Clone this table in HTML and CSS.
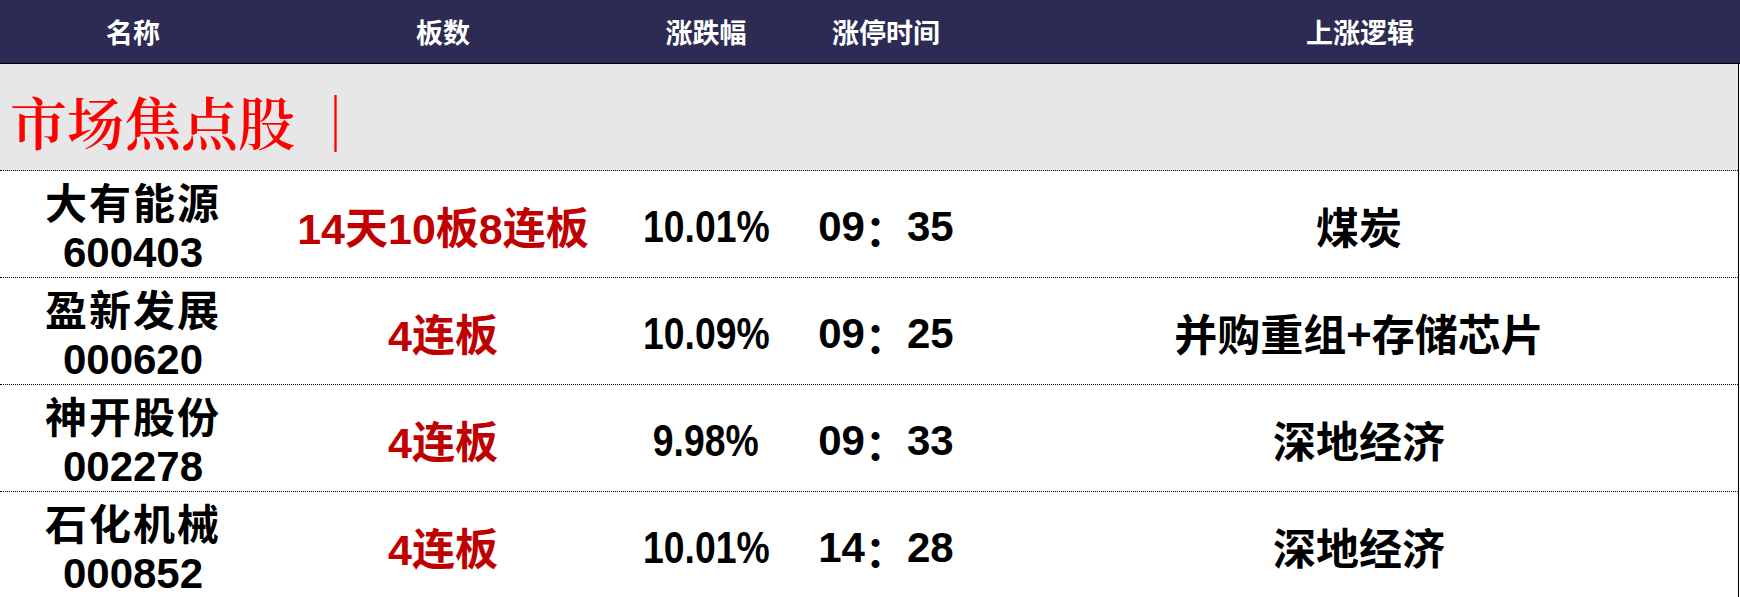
FILE: index.html
```html
<!DOCTYPE html>
<html lang="zh-CN">
<head>
<meta charset="utf-8">
<title>市场焦点股</title>
<link rel="stylesheet" href="styles.css">
</head>
<body>
<div class="sheet">
  <div class="head row-grid">
    <div class="hcell">名称</div>
    <div class="hcell">板数</div>
    <div class="hcell">涨跌幅</div>
    <div class="hcell">涨停时间</div>
    <div class="hcell">上涨逻辑</div>
  </div>
  <div class="body">
    <div class="section">
      <span class="section-title">市场焦点股</span><span class="section-bar">｜</span>
    </div>
    <div class="row row-grid">
      <div class="cell name"><span class="cn">大有能源</span><span class="code">600403</span></div>
      <div class="cell boards">14天10板8连板</div>
      <div class="cell pct"><span class="num">10.01%</span></div>
      <div class="cell time">09<span class="colon">：</span>35</div>
      <div class="cell logic">煤炭</div>
    </div>
    <div class="row row-grid">
      <div class="cell name"><span class="cn">盈新发展</span><span class="code">000620</span></div>
      <div class="cell boards">4连板</div>
      <div class="cell pct"><span class="num">10.09%</span></div>
      <div class="cell time">09<span class="colon">：</span>25</div>
      <div class="cell logic">并购重组+存储芯片</div>
    </div>
    <div class="row row-grid">
      <div class="cell name"><span class="cn">神开股份</span><span class="code">002278</span></div>
      <div class="cell boards">4连板</div>
      <div class="cell pct"><span class="num">9.98%</span></div>
      <div class="cell time">09<span class="colon">：</span>33</div>
      <div class="cell logic">深地经济</div>
    </div>
    <div class="row row-grid last">
      <div class="cell name"><span class="cn">石化机械</span><span class="code">000852</span></div>
      <div class="cell boards">4连板</div>
      <div class="cell pct"><span class="num">10.01%</span></div>
      <div class="cell time">14<span class="colon">：</span>28</div>
      <div class="cell logic">深地经济</div>
    </div>
  </div>
</div>
</body>
</html>
```
FILE: styles.css
```css
html, body {
  margin: 0;
  padding: 0;
  background: #ffffff;
}

.sheet {
  width: 1740px;
  height: 597px;
  font-family: "Liberation Sans", "Noto Sans CJK SC", sans-serif;
  color: #000;
}

.row-grid {
  display: grid;
  grid-template-columns: 266px 354px 172px 188px 1fr;
}

.head {
  height: 63px;
  background: #2c2b53;
  border-bottom: 1px solid #000;
}

.hcell {
  display: flex;
  align-items: center;
  justify-content: center;
  color: #fff;
  font-family: "Noto Sans CJK SC", sans-serif;
  font-weight: 700;
  font-size: 27px;
  padding-bottom: 1px;
}

.body {
  width: 1738px;
  border-right: 1px solid #000;
}

.section {
  box-sizing: border-box;
  height: 107px;
  background: #e7e7e7;
  border-bottom: 1px dotted #000;
  display: flex;
  align-items: center;
  padding-left: 10px;
  padding-top: 6px;
  color: #ff0000;
  font-family: "Noto Serif CJK SC", "AR PL UMing CN", "Liberation Serif", serif;
  font-size: 57px;
  font-weight: 600;
}

.section-bar {
  margin-left: 12px;
  font-weight: 400;
}

.row {
  height: 106px;
  border-bottom: 1px dotted #000;
}

.row.last {
  border-bottom: 1px solid #000;
}

.cell {
  display: flex;
  align-items: center;
  justify-content: center;
  text-align: center;
  white-space: nowrap;
}

.name {
  flex-direction: column;
  padding-top: 4px;
}

.name .cn {
  font-family: "Noto Sans CJK SC", sans-serif;
  font-size: 42px;
  font-weight: 700;
  line-height: 52px;
  letter-spacing: 2px;
}

.name .code {
  font-family: "Liberation Sans", sans-serif;
  font-size: 42px;
  font-weight: 700;
  line-height: 52px;
}

.boards {
  color: #c00000;
  font-size: 43px;
  font-weight: 700;
  font-family: "Liberation Sans", "Noto Sans CJK SC", sans-serif;
}

.pct {
  font-family: "Liberation Sans", sans-serif;
  font-size: 45px;
  font-weight: 700;
  padding-top: 4px;
}

.pct .num {
  display: inline-block;
  transform: scaleX(0.83);
}

.time {
  font-family: "Liberation Sans", "Noto Sans CJK SC", sans-serif;
  font-size: 42px;
  font-weight: 700;
  padding-top: 4px;
}

.colon {
  font-family: "Noto Sans CJK SC", sans-serif;
}

.logic {
  font-family: "Noto Sans CJK SC", sans-serif;
  font-size: 43px;
  font-weight: 700;
}
```
